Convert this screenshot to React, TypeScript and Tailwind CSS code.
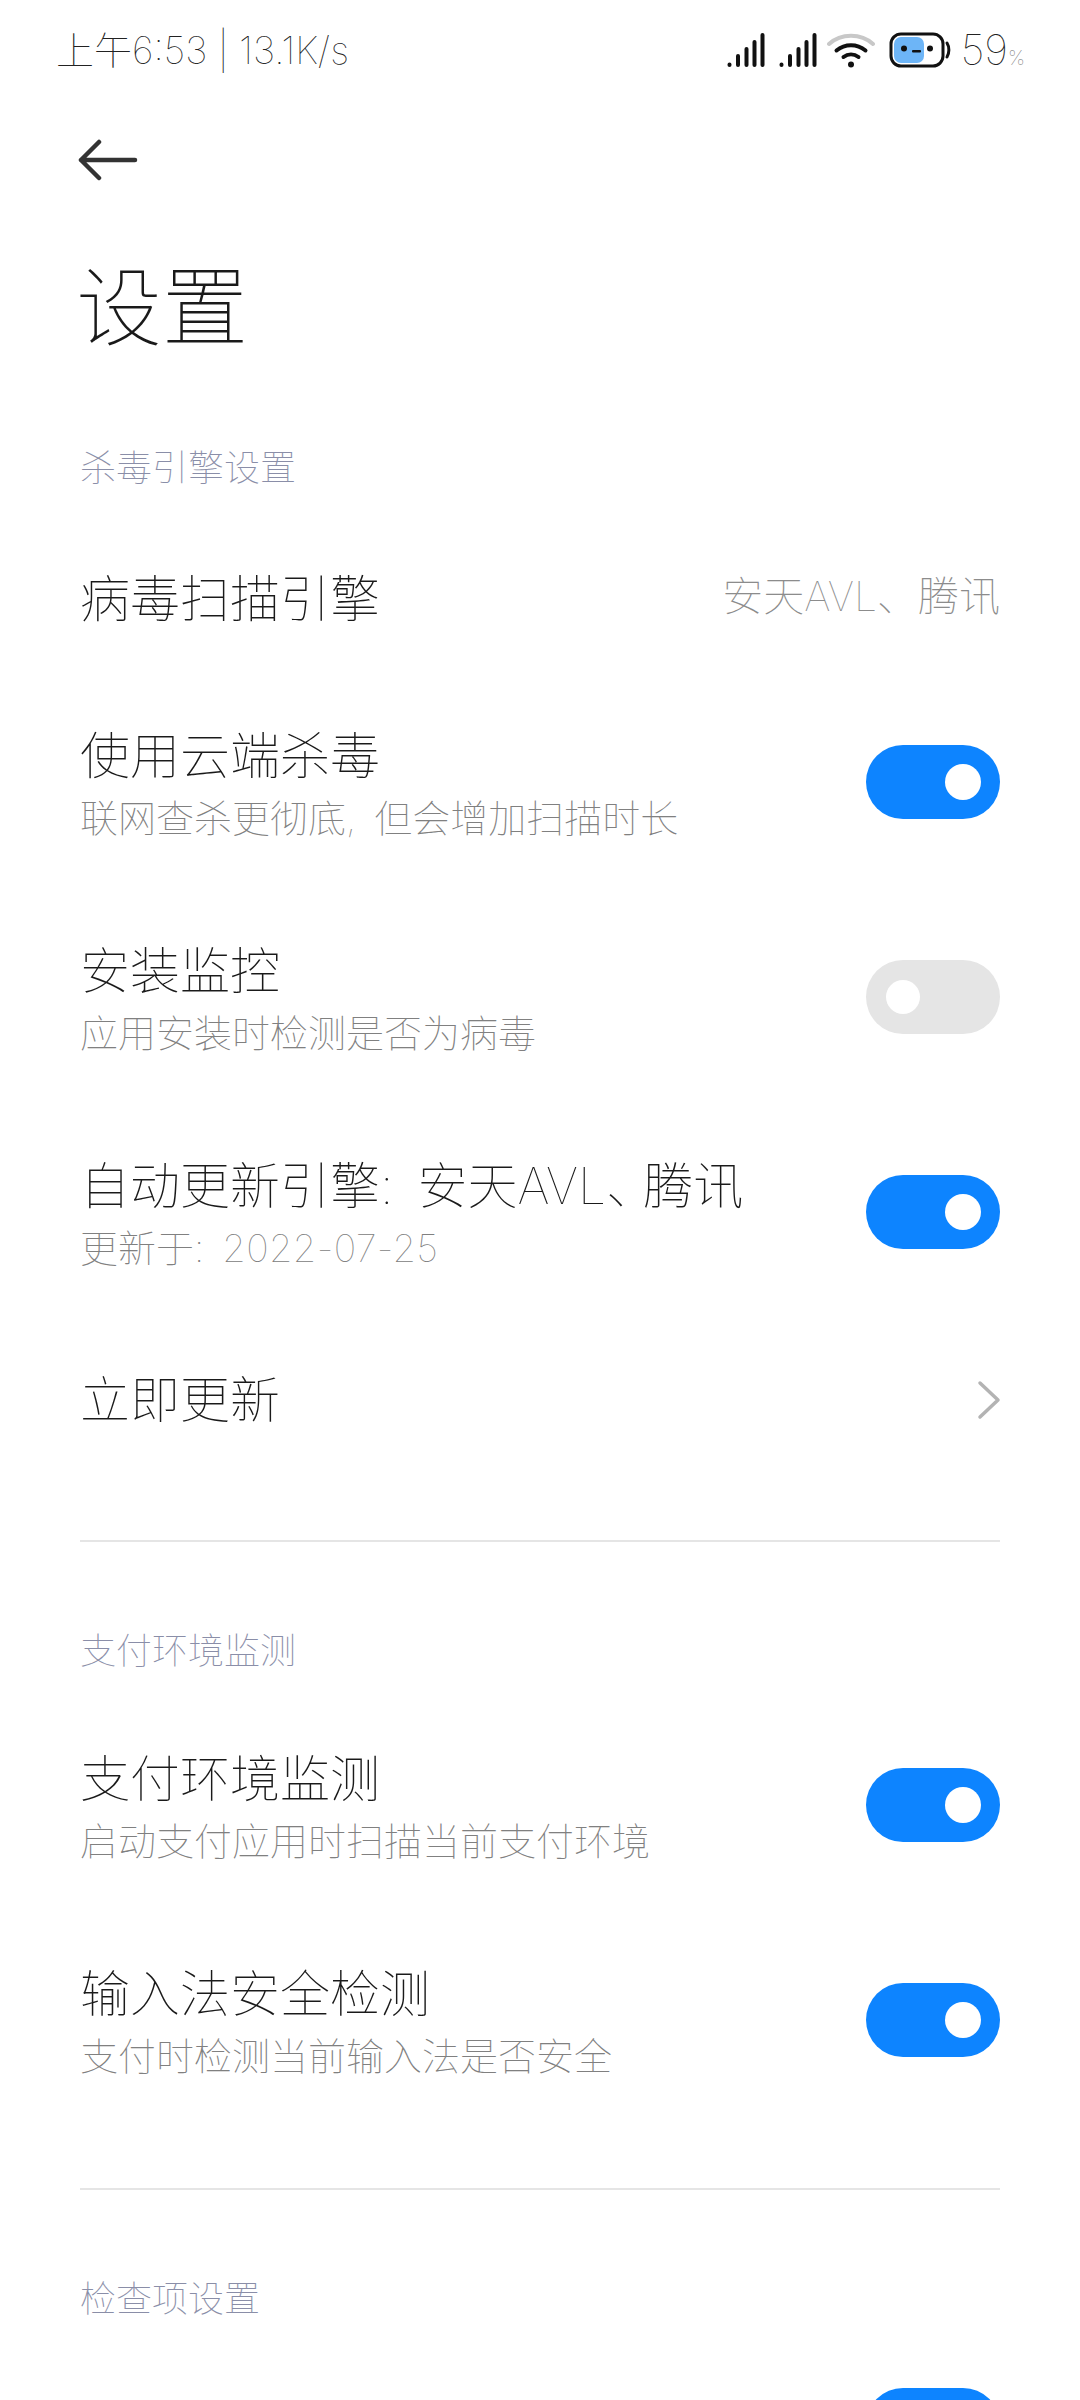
import React from "react";

const SignalIcon = () => (
  <svg width="38" height="34" viewBox="0 0 38 34" className="shrink-0">
    <g stroke="#111" strokeWidth="4" strokeLinecap="round">
      <path d="M2.500 31.500v.5" />
      <path d="M11 23v9" />
      <path d="M19.500 16v16" />
      <path d="M27.500 9v23" />
      <path d="M35.500 2v30" />
    </g>
  </svg>
);

const WifiIcon = () => (
  <svg width="48" height="36" viewBox="0 0 48 36" className="shrink-0">
    <g fill="none" strokeLinecap="round">
      <path d="M2 12C14 1 34 1 46 12" stroke="#c8c8c8" strokeWidth="4" />
      <path d="M9.500 18.500C18 11.500 30 11.500 38.500 18.500" stroke="#111" strokeWidth="4" />
      <path d="M16.500 25C21 21.500 27 21.500 31.500 25" stroke="#111" strokeWidth="4" />
    </g>
    <circle cx="24" cy="32.500" r="3" fill="#111" />
  </svg>
);

const BatteryIcon = () => (
  <svg width="62" height="36" viewBox="0 0 62 36" className="shrink-0">
    <rect x="2" y="2" width="52" height="32" rx="10" fill="#fff" stroke="#111" strokeWidth="3" />
    <rect x="5" y="5" width="30" height="26" rx="7" fill="#6db5f7" />
    <circle cx="15" cy="16.500" r="3" fill="#111" />
    <circle cx="41" cy="16.500" r="3" fill="#111" />
    <rect x="23" y="18" width="9" height="2.500" rx="1" fill="#111" />
    <path d="M58 11c2.500 4 2.500 10 0 14" fill="none" stroke="#111" strokeWidth="3" strokeLinecap="round" />
  </svg>
);

const BackArrow = () => (
  <svg width="60" height="42" viewBox="0 0 60 42" className="-ml-[2px] shrink-0">
    <path
      d="M57 21H3M21 3 3 21l18 18"
      fill="none"
      stroke="#333"
      strokeWidth="4.500"
      strokeLinecap="round"
      strokeLinejoin="round"
    />
  </svg>
);

const Chevron = () => (
  <svg width="24" height="40" viewBox="0 0 24 40" className="-mr-[1px] shrink-0">
    <path
      d="M3 3l18 17L3 37"
      fill="none"
      stroke="#b3b3b3"
      strokeWidth="3.500"
      strokeLinecap="round"
      strokeLinejoin="round"
    />
  </svg>
);

const Toggle = ({ on }: { on: boolean }) => (
  <div
    className={`flex h-[74px] w-[134px] shrink-0 items-center rounded-full ${
      on ? "justify-end bg-[#0d84ff] pr-[19px]" : "justify-start bg-[#e5e5e5] pl-[20px]"
    }`}
  >
    <div className={`rounded-full bg-white ${on ? "h-[36px] w-[36px]" : "h-[34px] w-[34px]"}`} />
  </div>
);

const SectionLabel = ({ text, className }: { text: string; className: string }) => (
  <div className={`flex items-center text-[36px] leading-none text-[#8a8ea8] ${className}`}>{text}</div>
);

const SwitchRow = ({
  title,
  sub,
  on,
}: {
  title: React.ReactNode;
  sub: React.ReactNode;
  on: boolean;
}) => (
  <div className="flex h-[215px] items-center justify-between">
    <div className="flex flex-col pt-[4px]">
      <div className="text-[50px] leading-[60px] text-[#1a1a1a]">{title}</div>
      <div className="mt-[9px] text-[38px] leading-[46px] text-[#808080]">{sub}</div>
    </div>
    <Toggle on={on} />
  </div>
);

export default function App() {
  return (
    <div className="h-[2400px] w-[1080px] overflow-hidden bg-white font-[Inter,'Noto_Sans_CJK_SC',sans-serif] font-thin">
      {/* status bar */}
      <div className="flex h-[100px] items-center justify-between pl-[56px] pr-[55px]">
        <div className="text-[38px] leading-none text-[#222]">上午6:53 | 13.1K/s</div>
        <div className="flex items-center">
          <SignalIcon />
          <div className="ml-[14px]">
            <SignalIcon />
          </div>
          <div className="ml-[10px]">
            <WifiIcon />
          </div>
          <div className="ml-[14px]">
            <BatteryIcon />
          </div>
          <div className="ml-[10px] flex items-baseline text-[#222]">
            <span className="text-[42px] leading-none">59</span>
            <span className="text-[20px] leading-none text-[#666]">%</span>
          </div>
        </div>
      </div>

      <div className="px-[80px]">
        {/* back button */}
        <div className="flex h-[120px] items-center">
          <BackArrow />
        </div>

        <div className="flex h-[210px] items-start pt-[42px]">
          <h1 className="-ml-[4px] text-[86px] font-thin leading-[92px] text-[#1a1a1a]">设置</h1>
        </div>

        <SectionLabel text="杀毒引擎设置" className="h-[75px]" />

        <div className="flex h-[169px] items-center justify-between pt-[13px]">
          <div className="pt-[6px] text-[50px] leading-[60px] text-[#1a1a1a]">病毒扫描引擎</div>
          <div className="text-[41px] leading-none text-[#8c8c8c]">安天AVL、腾讯</div>
        </div>

        <SwitchRow
          title="使用云端杀毒"
          sub={
            <>
              联网查杀更彻底<span className="mr-[18px]">,</span>但会增加扫描时长
            </>
          }
          on
        />
        <SwitchRow title="安装监控" sub="应用安装时检测是否为病毒" on={false} />
        <SwitchRow
          title={
            <>
              自动更新引擎<span className="mr-[24px]">:</span>安天AVL
              <span className="tracking-[-13px]">、</span>腾讯
            </>
          }
          sub={
            <>
              更新于<span className="mr-[18px]">:</span>
              <span className="tracking-[0.3px]">2022-07-25</span>
            </>
          }
          on
        />

        <div className="flex h-[161px] items-center justify-between">
          <div className="text-[50px] leading-[60px] text-[#1a1a1a]">立即更新</div>
          <Chevron />
        </div>

        <div className="mt-[60px] h-[2px] bg-[#e5e5e5]" />

        <SectionLabel text="支付环境监测" className="mt-[72px] h-[74px]" />
        <div className="mt-[9px]">
          <SwitchRow title="支付环境监测" sub="启动支付应用时扫描当前支付环境" on />
          <SwitchRow title="输入法安全检测" sub="支付时检测当前输入法是否安全" on />
        </div>

        <div className="mt-[61px] h-[2px] bg-[#e5e5e5]" />

        <SectionLabel text="检查项设置" className="mt-[72px] h-[74px]" />
        <div className="mt-[52px] flex justify-end">
          <Toggle on />
        </div>
      </div>
    </div>
  );
}
